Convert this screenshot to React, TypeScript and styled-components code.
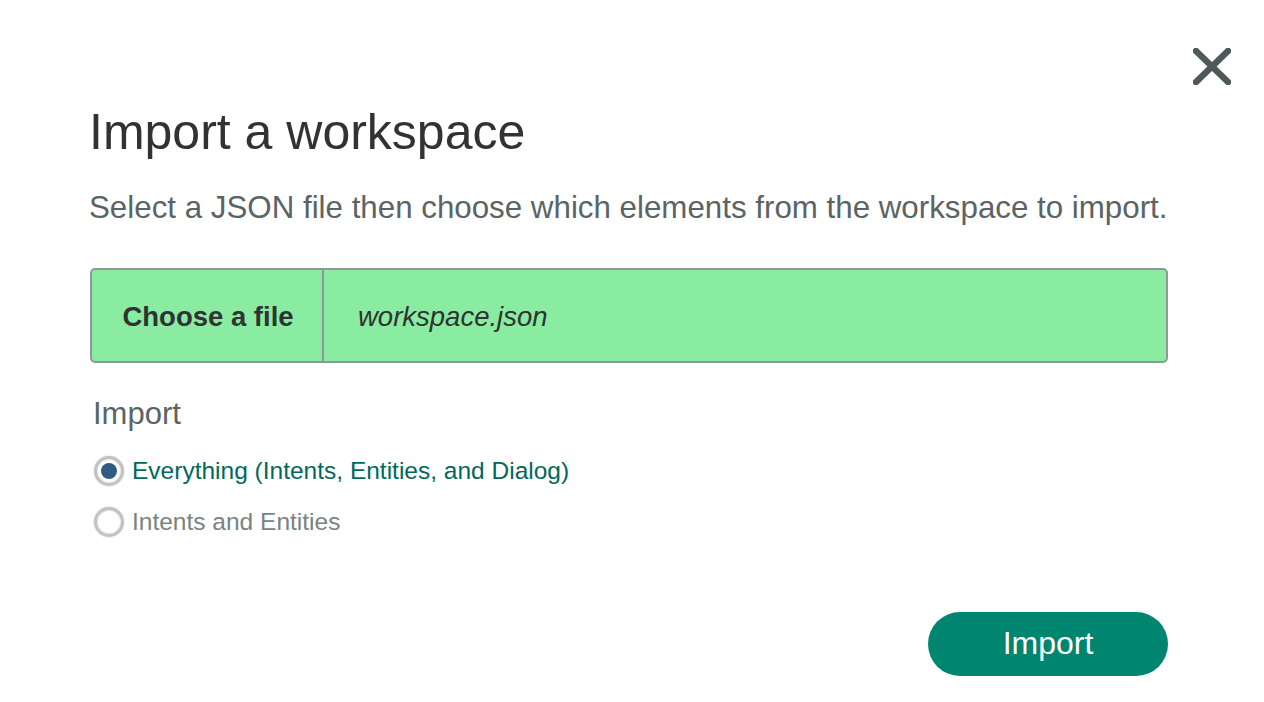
import React from "react";
import styled, { createGlobalStyle } from "styled-components";

const Global = createGlobalStyle`
  html, body { margin: 0; padding: 0; background: #ffffff; }
  body { font-family: "Liberation Sans", Arial, sans-serif; }
  * { box-sizing: border-box; }
`;

const Dialog = styled.div`
  width: 1264px;
  height: 702px;
  background: #ffffff;
  display: flex;
  flex-direction: column;
  padding: 48px 33px 0 89px;
`;

const TopBar = styled.div`
  display: flex;
  justify-content: flex-end;
  height: 37px;
`;

const CloseButton = styled.button`
  width: 38px;
  height: 37px;
  padding: 0;
  border: none;
  background: none;
  cursor: pointer;
  display: flex;
`;

const Body = styled.div`
  display: flex;
  flex-direction: column;
  padding-right: 63px;
`;

const Title = styled.h1`
  margin: 19px 0 0 0;
  font-size: 50px;
  line-height: 56px;
  font-weight: 400;
  color: #323232;
`;

const Subtitle = styled.p`
  margin: 30px 0 0 0;
  font-size: 31.3px;
  line-height: 36px;
  color: #5a6464;
`;

const FileBox = styled.div`
  margin: 42px 0 0 1px;
  height: 95px;
  display: flex;
  align-items: stretch;
  background: #89eca0;
  border: 2px solid #8f9898;
  border-radius: 5px;
`;

const ChooseButton = styled.div`
  width: 232px;
  display: flex;
  align-items: center;
  justify-content: center;
  padding-left: 2px;
  font-size: 27.5px;
  font-weight: 700;
  color: #2f3333;
  border-right: 2px solid #8f9898;
  padding-top: 2px;
`;

const FileName = styled.div`
  display: flex;
  align-items: center;
  padding-left: 34px;
  padding-top: 2px;
  font-size: 27.5px;
  font-style: italic;
  color: #2f3333;
`;

const SectionLabel = styled.div`
  margin: 33px 0 0 4px;
  font-size: 31px;
  line-height: 36px;
  color: #5a6464;
`;

const Options = styled.div`
  display: flex;
  flex-direction: column;
  gap: 21px;
  margin: 24px 0 0 5px;
`;

const Option = styled.label<{ $selected?: boolean }>`
  display: flex;
  align-items: center;
  gap: 8px;
  height: 30px;
  font-size: 24.5px;
  color: ${(p) => (p.$selected ? "#00695b" : "#788383")};
  cursor: pointer;
`;

const RadioCircle = styled.span<{ $selected?: boolean }>`
  width: 30px;
  height: 30px;
  border-radius: 50%;
  flex: none;
  display: flex;
  align-items: center;
  justify-content: center;
  background: #ffffff;
  border: 3px solid #c2c2c2;
  box-shadow: inset 0 0 2px rgba(0, 0, 0, 0.3), 0 0 2px rgba(0, 0, 0, 0.2);
  &::after {
    content: "";
    width: 16px;
    height: 16px;
    border-radius: 50%;
    background: ${(p) => (p.$selected ? "#2f5a86" : "transparent")};
  }
`;

const Footer = styled.div`
  display: flex;
  justify-content: flex-end;
  margin-top: 75px;
`;

const PrimaryButton = styled.button`
  width: 240px;
  height: 64px;
  border: none;
  border-radius: 32px;
  background: #008571;
  color: #ffffff;
  font-family: "Liberation Sans", Arial, sans-serif;
  font-size: 32px;
  cursor: pointer;
  padding-bottom: 2px;
`;

export default function App() {
  return (
    <>
      <Global />
      <Dialog>
        <TopBar>
          <CloseButton aria-label="Close">
            <svg width="38" height="37" viewBox="0 0 38 37">
              <path
                d="M3 3 L35 34 M35 3 L3 34"
                stroke="#4e5959"
                strokeWidth="6.5"
                strokeLinecap="square"
                fill="none"
              />
            </svg>
          </CloseButton>
        </TopBar>
        <Body>
          <Title>Import a workspace</Title>
          <Subtitle>
            Select a JSON file then choose which elements from the workspace to import.
          </Subtitle>
          <FileBox>
            <ChooseButton>Choose a file</ChooseButton>
            <FileName>workspace.json</FileName>
          </FileBox>
          <SectionLabel>Import</SectionLabel>
          <Options>
            <Option $selected>
              <RadioCircle $selected />
              Everything (Intents, Entities, and Dialog)
            </Option>
            <Option>
              <RadioCircle />
              Intents and Entities
            </Option>
          </Options>
          <Footer>
            <PrimaryButton>Import</PrimaryButton>
          </Footer>
        </Body>
      </Dialog>
    </>
  );
}
